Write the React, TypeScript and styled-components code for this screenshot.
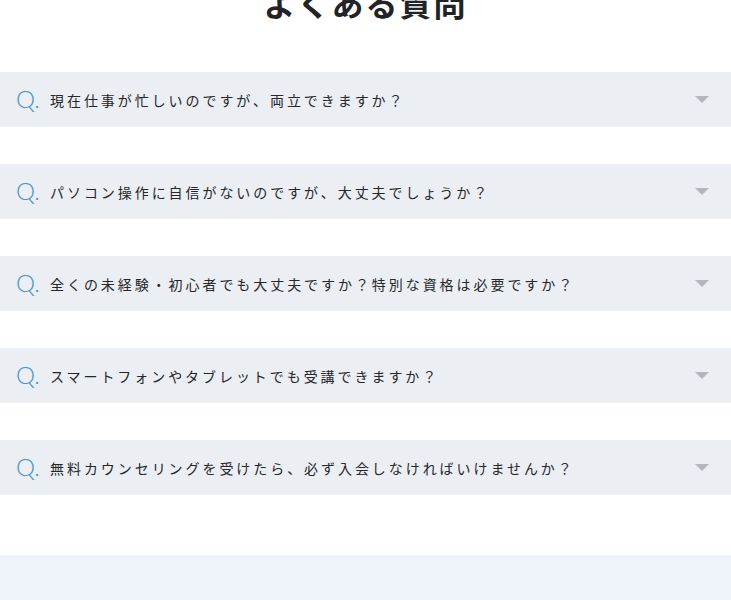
import React from "react";
import styled, { createGlobalStyle } from "styled-components";

const GlobalStyle = createGlobalStyle`
  html, body { margin: 0; padding: 0; background: #ffffff; }
  body { font-family: "Noto Sans CJK JP", "Noto Sans", sans-serif; overflow: hidden; }
`;

const Page = styled.div`
  width: 731px;
  height: 600px;
  overflow: hidden;
  display: flex;
  flex-direction: column;
`;

const Title = styled.h2`
  margin: -14px 0 0;
  font-size: 32px;
  line-height: 32px;
  font-weight: 700;
  letter-spacing: 2px;
  color: #222326;
  text-align: center;
`;

const List = styled.div`
  margin-top: 54px;
  display: flex;
  flex-direction: column;
  gap: 37px;
`;

const Item = styled.div`
  height: 55px;
  background: #ebeef2;
  display: flex;
  align-items: center;
  padding: 0 22px 0 16px;
`;

const QMark = styled.span`
  font-family: "Lato", "Noto Sans", sans-serif;
  font-weight: 300;
  font-size: 24px;
  color: #4a93c8;
  width: 34px;
  flex: none;
  line-height: 1;
  margin-top: -2px;
`;

const Question = styled.span`
  flex: 1;
  font-size: 14px;
  letter-spacing: 0.21em;
  color: #25272a;
  line-height: 1;
`;

const Arrow = styled.span`
  width: 0;
  height: 0;
  border-left: 7px solid transparent;
  border-right: 7px solid transparent;
  border-top: 7px solid #b3b7bd;
  flex: none;
`;

const Footer = styled.div`
  margin-top: 60px;
  height: 60px;
  background: #eff4fb;
  flex: none;
`;

const questions = [
  "現在仕事が忙しいのですが、両立できますか？",
  "パソコン操作に自信がないのですが、大丈夫でしょうか？",
  "全くの未経験・初心者でも大丈夫ですか？特別な資格は必要ですか？",
  "スマートフォンやタブレットでも受講できますか？",
  "無料カウンセリングを受けたら、必ず入会しなければいけませんか？",
];

export default function App() {
  return (
    <Page>
      <GlobalStyle />
      <Title>よくある質問</Title>
      <List>
        {questions.map((q) => (
          <Item key={q}>
            <QMark>Q.</QMark>
            <Question>{q}</Question>
            <Arrow />
          </Item>
        ))}
      </List>
      <Footer />
    </Page>
  );
}
